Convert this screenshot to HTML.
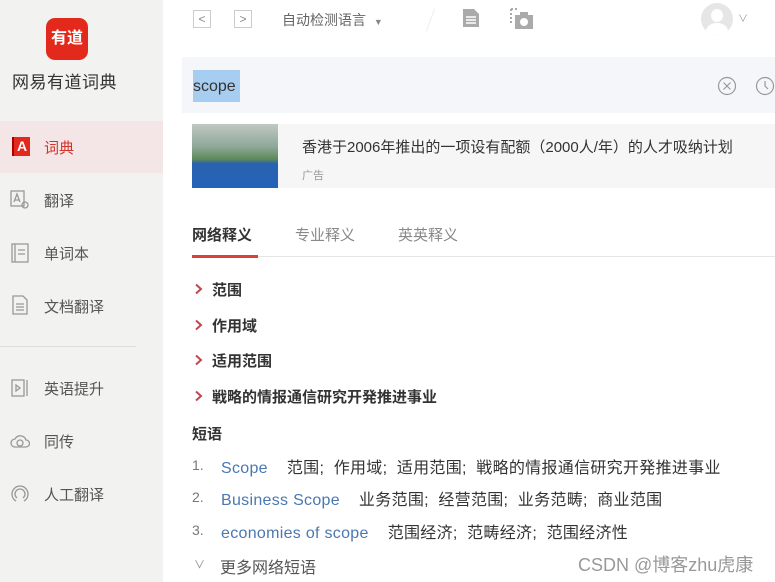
<!DOCTYPE html>
<html><head><meta charset="utf-8"><style>
*{margin:0;padding:0;box-sizing:border-box}
body{width:775px;height:582px;overflow:hidden;background:#fff;font-family:"Liberation Sans","Noto Sans CJK SC",sans-serif;position:relative;color:#333}
.abs{position:absolute}
.side{left:0;top:0;width:163px;height:582px;background:#f2f2f0}
.logo{left:46px;top:18px;width:42px;height:42px;background:#e3291b;border-radius:9px;color:#fff;font-size:16px;font-weight:bold;text-align:center;line-height:42px}
.brand{left:12px;top:68px;font-size:17px;color:#333;letter-spacing:0.5px}
.active{left:0;top:121px;width:163px;height:52px;background:#f4e6e6}
.nav{left:44px;font-size:15px;color:#555}
.ico{left:10px;width:20px;height:20px}
.div{left:0;top:346px;width:136px;height:1px;background:#ddd}
.t{font-size:15px}
.chev{left:194px}
.def{left:212px;font-size:15px;font-weight:bold;color:#333}
.num{left:192px;font-size:14px;color:#777}
.en{color:#4a78b0}
.ph{left:221px;font-size:16px;color:#333;white-space:nowrap;letter-spacing:0.3px}
</style></head><body>
<div class="abs side"></div>
<div class="abs logo">有道</div>
<div class="abs brand">网易有道词典</div>
<div class="abs active"></div>
<div class="abs" style="left:12px;top:137px;width:18px;height:19px;background:#e3291b;color:#fff;font-size:14px;font-weight:bold;text-align:center;line-height:19px;border-left:2px solid #a00">A</div>
<div class="abs nav" style="top:137px;color:#d0342c">词典</div>
<svg class="abs ico" style="top:190px" viewBox="0 0 20 20" fill="none" stroke="#999" stroke-width="1.3"><rect x="1" y="1" width="13" height="15"/><path d="M4 12l3-8 3 8M5 10h4"/><circle cx="15" cy="15" r="3"/></svg>
<div class="abs nav" style="top:190px">翻译</div>
<svg class="abs ico" style="top:243px" viewBox="0 0 20 20" fill="none" stroke="#999" stroke-width="1.3"><rect x="2" y="1" width="16" height="18"/><path d="M5 1v18M8 7h7M8 11h7"/></svg>
<div class="abs nav" style="top:243px">单词本</div>
<svg class="abs ico" style="top:295px" viewBox="0 0 20 20" fill="none" stroke="#999" stroke-width="1.3"><path d="M3 1h10l4 4v14H3z M6 9h8M6 12h8M6 15h8"/></svg>
<div class="abs nav" style="top:296px">文档翻译</div>
<div class="abs div"></div>
<svg class="abs ico" style="top:378px" viewBox="0 0 20 20" fill="none" stroke="#999" stroke-width="1.3"><rect x="2" y="2" width="12" height="16"/><path d="M17 2v16M6 7l4 3-4 3z"/></svg>
<div class="abs nav" style="top:378px">英语提升</div>
<svg class="abs ico" style="top:431px" viewBox="0 0 20 20" fill="none" stroke="#999" stroke-width="1.3"><path d="M5 16a4 4 0 010-8 6 6 0 0111 1 3.5 3.5 0 010 7z"/><circle cx="10" cy="12" r="3"/></svg>
<div class="abs nav" style="top:431px">同传</div>
<svg class="abs ico" style="top:483px" viewBox="0 0 20 20" fill="none" stroke="#999" stroke-width="1.3"><path d="M6 18a8 8 0 118 0M7 15a5 5 0 116 0"/></svg>
<div class="abs nav" style="top:484px">人工翻译</div>

<div class="abs" style="left:193px;top:10px;width:18px;height:18px;border:1px solid #ccc;color:#888;font-size:12px;text-align:center;line-height:16px">&lt;</div>
<div class="abs" style="left:234px;top:10px;width:18px;height:18px;border:1px solid #ccc;color:#888;font-size:12px;text-align:center;line-height:16px">&gt;</div>
<div class="abs" style="left:282px;top:10px;font-size:14px;color:#666">自动检测语言 <span style="font-size:9px;color:#888;margin-left:4px">▼</span></div>
<div class="abs" style="left:430px;top:8px;width:1px;height:24px;background:#eee;transform:rotate(20deg)"></div>
<svg class="abs" style="left:462px;top:8px" width="18" height="20" viewBox="0 0 18 20"><path d="M1 1h11l5 5v13H1z" fill="#aaa"/><path d="M4 9h10M4 12h10M4 15h10" stroke="#fff" stroke-width="1.5"/></svg>
<svg class="abs" style="left:510px;top:8px" width="24" height="22" viewBox="0 0 24 22"><path d="M1 1h8M1 1v14" stroke="#aaa" stroke-dasharray="2 2" stroke-width="2" fill="none"/><rect x="5" y="7" width="18" height="14" fill="#aaa"/><rect x="10" y="4" width="8" height="4" fill="#aaa"/><circle cx="14" cy="14" r="4" fill="#fff"/></svg>
<div class="abs" style="left:701px;top:3px;width:32px;height:32px;border-radius:50%;background:#e6e6e6;overflow:hidden"><div style="position:absolute;left:10px;top:6px;width:12px;height:13px;border-radius:50%;background:#fff"></div><div style="position:absolute;left:5px;top:20px;width:22px;height:16px;border-radius:50%;background:#fff"></div></div>
<div class="abs" style="left:738px;top:10px;color:#999;font-size:10px">∨</div>

<div class="abs" style="left:182px;top:57px;width:593px;height:56px;background:#f5f6f9"></div>
<div class="abs" style="left:193px;top:70px;width:47px;height:32px;background:#a7cdf0;font-size:16px;color:#333;line-height:34px">scope</div>
<svg class="abs" style="left:717px;top:76px" width="20" height="20" viewBox="0 0 20 20" fill="none" stroke="#999" stroke-width="1.2"><circle cx="10" cy="10" r="8.5"/><path d="M6.5 6.5l7 7M13.5 6.5l-7 7"/></svg>
<svg class="abs" style="left:755px;top:76px" width="22" height="20" viewBox="0 0 22 20" fill="none" stroke="#999" stroke-width="1.2"><circle cx="10" cy="10" r="8.5"/><path d="M10 5v5l3 3"/></svg>

<div class="abs" style="left:278px;top:124px;width:497px;height:64px;background:#f6f6f6"></div>
<div class="abs" style="left:192px;top:124px;width:86px;height:64px;background:linear-gradient(#c0c8c2 0,#8fa89a 35%,#5c8a5a 55%,#2a62b0 62%,#2462b8 100%)"></div>
<div class="abs" style="left:302px;top:136px;font-size:15px;color:#333;white-space:nowrap">香港于2006年推出的一项设有配额（2000人/年）的人才吸纳计划</div>
<div class="abs" style="left:302px;top:167px;font-size:11px;color:#999">广告</div>

<div class="abs t" style="left:192px;top:224px;font-weight:bold;color:#333">网络释义</div>
<div class="abs t" style="left:295px;top:224px;color:#888">专业释义</div>
<div class="abs t" style="left:398px;top:224px;color:#888">英英释义</div>
<div class="abs" style="left:192px;top:256px;width:583px;height:1px;background:#e6e6e6"></div>
<div class="abs" style="left:192px;top:255px;width:66px;height:3px;background:#d9413a"></div>

<svg class="abs chev" style="top:283px" width="10" height="12" viewBox="0 0 10 12"><path d="M2 1.5l5 4.5-5 4.5" fill="none" stroke="#c0474f" stroke-width="2"/></svg>
<div class="abs def" style="top:279px">范围</div>
<svg class="abs chev" style="top:319px" width="10" height="12" viewBox="0 0 10 12"><path d="M2 1.5l5 4.5-5 4.5" fill="none" stroke="#c0474f" stroke-width="2"/></svg>
<div class="abs def" style="top:315px">作用域</div>
<svg class="abs chev" style="top:354px" width="10" height="12" viewBox="0 0 10 12"><path d="M2 1.5l5 4.5-5 4.5" fill="none" stroke="#c0474f" stroke-width="2"/></svg>
<div class="abs def" style="top:350px">适用范围</div>
<svg class="abs chev" style="top:390px" width="10" height="12" viewBox="0 0 10 12"><path d="M2 1.5l5 4.5-5 4.5" fill="none" stroke="#c0474f" stroke-width="2"/></svg>
<div class="abs def" style="top:386px">戦略的情报通信研究开発推进事业</div>

<div class="abs" style="left:192px;top:423px;font-size:15px;font-weight:bold;color:#333">短语</div>
<div class="abs num" style="top:457px">1.</div>
<div class="abs ph" style="top:454px"><span class="en">Scope</span>&nbsp;&nbsp;&nbsp; 范围;&nbsp; 作用域;&nbsp; 适用范围;&nbsp; 戦略的情报通信研究开発推进事业</div>
<div class="abs num" style="top:489px">2.</div>
<div class="abs ph" style="top:486px"><span class="en">Business Scope</span>&nbsp;&nbsp;&nbsp; 业务范围;&nbsp; 经营范围;&nbsp; 业务范畴;&nbsp; 商业范围</div>
<div class="abs num" style="top:522px">3.</div>
<div class="abs ph" style="top:519px"><span class="en">economies of scope</span>&nbsp;&nbsp;&nbsp; 范围经济;&nbsp; 范畴经济;&nbsp; 范围经济性</div>
<div class="abs" style="left:194px;top:556px;font-size:11px;color:#888">∨</div>
<div class="abs" style="left:220px;top:554px;font-size:16px;color:#555">更多网络短语</div>
<div class="abs" style="left:578px;top:551px;font-size:18px;color:#999;white-space:nowrap">CSDN @博客zhu虎康</div>
</body></html>
